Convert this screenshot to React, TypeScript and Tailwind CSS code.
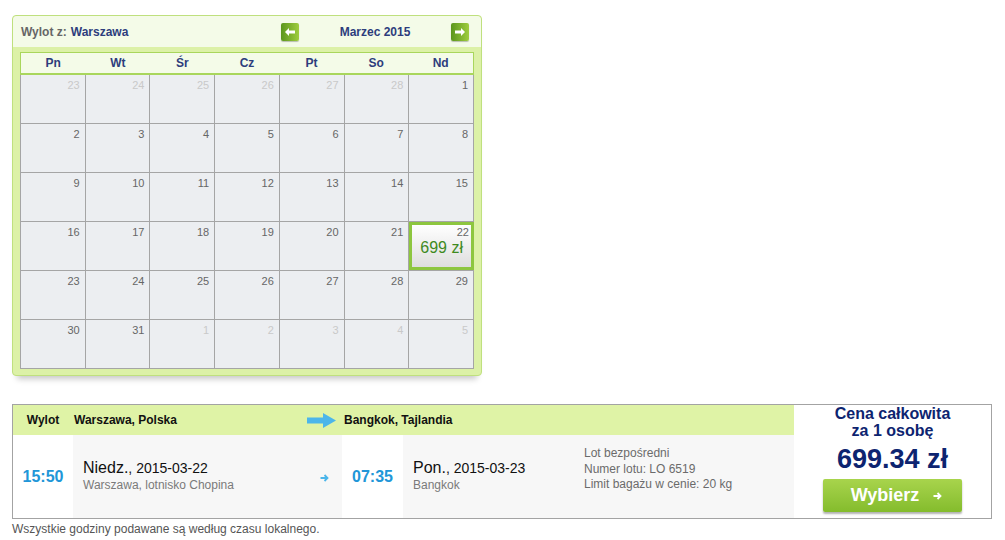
import React from "react";

type Day = { n: number; out?: boolean; price?: string };

const weekDays = ["Pn", "Wt", "Śr", "Cz", "Pt", "So", "Nd"];

function buildWeeks(): Day[][] {
  const days: Day[] = [];
  for (let n = 23; n <= 28; n++) days.push({ n, out: true });
  for (let n = 1; n <= 31; n++) days.push(n === 22 ? { n, price: "699 zł" } : { n });
  for (let n = 1; n <= 5; n++) days.push({ n, out: true });
  const weeks: Day[][] = [];
  for (let i = 0; i < days.length; i += 7) weeks.push(days.slice(i, i + 7));
  return weeks;
}

function NavArrow({ dir }: { dir: "left" | "right" }) {
  return (
    <button className="flex h-[18px] w-[18px] items-center justify-center rounded-[2px] bg-gradient-to-r from-[#5b961c] to-[#9fcd3e] shadow-[0_1px_1px_rgba(0,0,0,0.25)]">
      <svg width="10" height="8" viewBox="0 0 10 8">
        {dir === "left" ? (
          <path d="M0 4 L4 0 L4 2.5 L10 2.5 L10 5.5 L4 5.5 L4 8 Z" fill="#fff" />
        ) : (
          <path d="M10 4 L6 0 L6 2.5 L0 2.5 L0 5.5 L6 5.5 L6 8 Z" fill="#fff" />
        )}
      </svg>
    </button>
  );
}

function DayCell({ day, last }: { day: Day; last: boolean }) {
  if (day.price) {
    return (
      <div className="h-[49px] border-b border-[#a5a5a5]">
        <div className="flex h-full flex-col border-[3px] border-[#8dc63f] bg-gradient-to-b from-white to-[#dedede] px-[2px] pt-[1px]">
          <span className="text-right text-[11px] leading-[12px] text-[#666]">{day.n}</span>
          <span className="mt-[1px] text-center text-[16px] leading-[18px] text-[#3f8a1e]">{day.price}</span>
        </div>
      </div>
    );
  }
  return (
    <div
      className={`h-[49px] border-b border-[#a5a5a5] bg-[#eceef1] px-[5px] pt-[4px] text-right text-[11px] leading-[12px] ${
        last ? "" : "border-r"
      } ${day.out ? "text-[#c9c9c9]" : "text-[#666]"}`}
    >
      {day.n}
    </div>
  );
}

function Calendar() {
  const weeks = buildWeeks();
  return (
    <div className="ml-[12px] w-[470px] rounded-[4px] border border-[#bfe07e] bg-[#dcf1a7] shadow-[0_8px_6px_-5px_rgba(0,0,0,0.22)]">
      <div className="flex h-[31px] items-center rounded-t-[4px] bg-[#f4fbe8] pl-[8px] text-[12px] font-bold">
        <span className="text-[#666]">Wylot z:</span>
        <span className="ml-[4px] text-[#2d3d7c]">Warszawa</span>
        <div className="ml-auto mr-[12px] flex w-[188px] items-center">
          <NavArrow dir="left" />
          <span className="flex-1 text-center text-[#2d3d7c]">Marzec 2015</span>
          <NavArrow dir="right" />
        </div>
      </div>
      <div className="px-[7px] pb-[6px] pt-[5px]">
        <div className="grid grid-cols-7 border border-b-2 border-[#a9d65c] bg-[#f4fbe8]">
          {weekDays.map((d) => (
            <div key={d} className="h-[20px] text-center text-[12px] font-bold leading-[20px] text-[#2d3d7c]">
              {d}
            </div>
          ))}
        </div>
        <div className="grid grid-cols-7 border-l border-[#a5a5a5]">
          {weeks.map((w, wi) =>
            w.map((d, di) => <DayCell key={`${wi}-${di}`} day={d} last={di === 6 && !!d.price} />),
          )}
        </div>
      </div>
    </div>
  );
}

function SmallArrow({ color }: { color: string }) {
  return (
    <svg width="9" height="8" viewBox="0 0 9 8">
      <path d="M0.5 4 H7.5 M4.5 1 L7.5 4 L4.5 7" stroke={color} strokeWidth="1.8" fill="none" />
    </svg>
  );
}

function FlightBox() {
  return (
    <div className="ml-[12px] mt-[28px] flex h-[115px] w-[980px] border border-[#a3a3a3]">
      <div className="flex w-[781px] flex-col">
        <div className="flex h-[30px] items-center bg-[#dff3a6] text-[12px] font-bold text-[#111]">
          <span className="w-[60px] text-center">Wylot</span>
          <div className="flex w-[269px] items-center pl-[1px] pr-[6px]">
            <span>Warszawa, Polska</span>
            <svg className="ml-auto" width="29" height="15" viewBox="0 0 29 15">
              <path d="M0 4.5 H16 V0 L29 7.5 L16 15 V10.5 H0 Z" fill="#4cb6ea" />
            </svg>
          </div>
          <span className="pl-[2px]">Bangkok, Tajlandia</span>
        </div>
        <div className="flex flex-1">
          <div className="flex w-[60px] items-center justify-center pt-[1px] text-[16px] font-bold text-[#2196d8]">
            15:50
          </div>
          <div className="flex w-[269px] items-center bg-[#f7f7f7] pl-[10px] pr-[13px]">
            <div className="flex flex-col pb-[2px]">
              <span className="leading-[20px] text-[#111]">
                <span className="text-[16px]">Niedz.</span>
                <span className="text-[14px]">, 2015-03-22</span>
              </span>
              <span className="text-[12px] leading-[15px] text-[#7a7a7a]">Warszawa, lotnisko Chopina</span>
            </div>
            <span className="ml-auto pt-[2px]">
              <SmallArrow color="#4cb6ea" />
            </span>
          </div>
          <div className="flex w-[61px] items-center justify-center pt-[1px] text-[16px] font-bold text-[#2196d8]">
            07:35
          </div>
          <div className="flex flex-1 bg-[#f7f7f7] pl-[10px]">
            <div className="flex w-[171px] flex-col justify-center pb-[2px]">
              <span className="leading-[20px] text-[#111]">
                <span className="text-[16px]">Pon.</span>
                <span className="text-[14px]">, 2015-03-23</span>
              </span>
              <span className="text-[12px] leading-[15px] text-[#7a7a7a]">Bangkok</span>
            </div>
            <div className="flex flex-col pt-[11px] text-[12px] leading-[15.5px] text-[#6b6b6b]">
              <span>Lot bezpośredni</span>
              <span>Numer lotu: LO 6519</span>
              <span>Limit bagażu w cenie: 20 kg</span>
            </div>
          </div>
        </div>
      </div>
      <div className="flex flex-1 flex-col items-center bg-white">
        <span className="text-center text-[16px] font-bold leading-[17px] text-[#0d2470]">
          Cena całkowita
          <br />
          za 1 osobę
        </span>
        <span className="mt-[5px] text-[27px] font-bold leading-[30px] text-[#0d2470]">699.34 zł</span>
        <button className="mt-[5px] flex h-[33px] w-[139px] items-center justify-center gap-[14px] rounded-[2px] bg-gradient-to-b from-[#a8d44c] to-[#84bc2c] shadow-[0_2px_2px_rgba(0,0,0,0.3)]">
          <span className="pl-[8px] text-[18px] font-bold text-white">Wybierz</span>
          <SmallArrow color="#ffffff" />
        </button>
      </div>
    </div>
  );
}

export default function App() {
  return (
    <div className="h-[540px] w-[1005px] bg-white pt-[15px] font-['Liberation_Sans',Arial,sans-serif]">
      <Calendar />
      <FlightBox />
      <div className="ml-[12px] mt-[3px] text-[12px] leading-[15px] text-[#555]">
        Wszystkie godziny podawane są według czasu lokalnego.
      </div>
    </div>
  );
}
